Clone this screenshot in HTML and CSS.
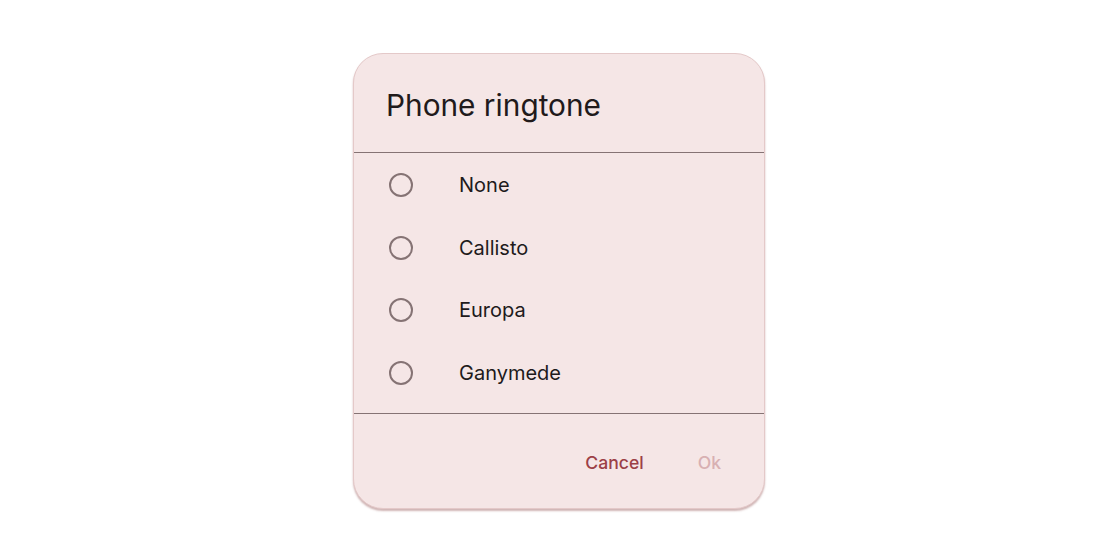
FILE: index.html
```html
<!DOCTYPE html>
<html>
<head>
<meta charset="utf-8">
<link rel="stylesheet" href="styles.css">
</head>
<body>
<div class="stage">
  <div class="dialog">
    <div class="title">Phone ringtone</div>
    <div class="divider"></div>
    <ul class="list">
      <li class="row"><span class="radio"></span><span class="label">None</span></li>
      <li class="row"><span class="radio"></span><span class="label">Callisto</span></li>
      <li class="row"><span class="radio"></span><span class="label">Europa</span></li>
      <li class="row"><span class="radio"></span><span class="label">Ganymede</span></li>
    </ul>
    <div class="divider"></div>
    <div class="actions">
      <span class="btn cancel">Cancel</span>
      <span class="btn ok">Ok</span>
    </div>
  </div>
</div>
</body>
</html>
```
FILE: styles.css
```css
html, body {
  margin: 0;
  padding: 0;
  background: #ffffff;
}
.stage {
  width: 1120px;
  height: 560px;
  display: flex;
  align-items: center;
  justify-content: center;
  font-family: Inter, "Open Sans", sans-serif;
}
.dialog {
  width: 410px;
  height: 454px;
  margin: 2px 2px 0 0;
  background: #f5e6e6;
  border: 1px solid #e4c9c9;
  border-radius: 30px;
  box-shadow: 0 2px 2px rgba(150, 90, 90, 0.45);
  display: flex;
  flex-direction: column;
  overflow: hidden;
}
.title {
  height: 98px;
  box-sizing: border-box;
  padding: 33px 0 0 32px;
  font-size: 29.8px;
  line-height: 36px;
  color: #211a1b;
}
.divider {
  height: 1px;
  background: #857374;
  flex: none;
}
.list {
  list-style: none;
  margin: 0;
  padding: 1px 0 9px 0;
}
.row {
  height: 62.5px;
  display: flex;
  align-items: center;
  padding-left: 35px;
}
.radio {
  width: 24px;
  height: 24px;
  box-sizing: border-box;
  border: 2.5px solid #857374;
  border-radius: 50%;
  flex: none;
}
.label {
  margin-left: 46px;
  font-size: 20px;
  color: #211a1b;
}
.actions {
  flex: 1;
  display: flex;
  align-items: center;
  justify-content: flex-end;
  padding: 3px 43px 0 0;
  gap: 54px;
  font-size: 17.6px;
  font-weight: 500;
}
.cancel { color: #9c4046; }
.ok { color: #d8b0b2; }
```
